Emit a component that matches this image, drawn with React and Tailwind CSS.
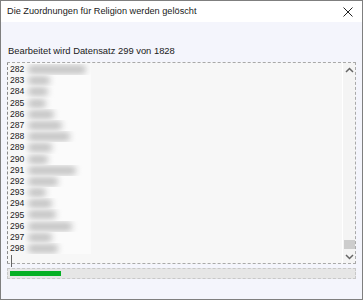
import React from 'react';

const rows = [
  { n: 282, w: 58 }, { n: 283, w: 22 }, { n: 284, w: 20 }, { n: 285, w: 18 },
  { n: 286, w: 26 }, { n: 287, w: 34 }, { n: 288, w: 42 }, { n: 289, w: 24 },
  { n: 290, w: 20 }, { n: 291, w: 48 }, { n: 292, w: 30 }, { n: 293, w: 18 },
  { n: 294, w: 24 }, { n: 295, w: 28 }, { n: 296, w: 44 }, { n: 297, w: 24 },
  { n: 298, w: 30 },
];

const App = () => {
  return (
    <div className="w-[363px] h-[300px] border border-[#7f7f7f] bg-[#f4f5fc] flex flex-col" style={{ fontFamily: '"Liberation Sans", Arial, sans-serif' }}>
      {/* title bar */}
      <div className="h-[21px] bg-white flex items-center justify-between pl-[6px] pr-[9px] shrink-0">
        <span className="text-[9.2px] text-[#1a1a1a]">Die Zuordnungen für Religion werden gelöscht</span>
        <svg width="10" height="10" viewBox="0 0 10 10">
          <path d="M0.5 0.5 L9.5 9.5 M9.5 0.5 L0.5 9.5" stroke="#222" strokeWidth="1" />
        </svg>
      </div>

      <div className="flex flex-col px-[6px] pt-[23px]">
        <div className="text-[9.4px] text-[#1a1a1a] leading-[12px] pl-[1px]">Bearbeitet wird Datensatz 299 von 1828</div>

        {/* list */}
        <div className="mt-[5px] h-[202px] border border-dashed border-[#a9a9a9] border-l-[#8a8a8a] bg-[#f7f7f7] flex">
          <div className="flex-1 pt-[1px] pl-[2px]">
            {rows.map((r) => (
              <div key={r.n} className="h-[11.2px] flex items-center text-[8.6px] leading-[11px] text-[#222]">
                <span className="w-[15px]">{r.n}</span>
                <div className="relative h-[11.2px] w-[66px] bg-[#fbfbfb] overflow-hidden">
                  <div className="absolute left-[3px] top-[1px] h-[9px] bg-[#c2c2c2] blur-[3px] rounded" style={{ width: r.w }} />
                </div>
              </div>
            ))}
            <div className="h-[12px] w-[1px] bg-[#666] ml-[1px] mt-[1px]" />
          </div>
          {/* scrollbar */}
          <div className="w-[13px] bg-[#f4f4f4] border-l border-white flex flex-col items-center justify-between pb-[1px]">
            <svg width="9" height="9" viewBox="0 0 9 9" className="mt-[3px]">
              <path d="M1 6 L4.5 2.5 L8 6" fill="none" stroke="#666" strokeWidth="1.5" />
            </svg>
            <div className="flex flex-col items-center">
              <div className="w-[11px] h-[9px] bg-[#cdcdcd]" />
              <svg width="9" height="9" viewBox="0 0 9 9" className="mt-[3px] mb-[1px]">
                <path d="M1 3 L4.5 6.5 L8 3" fill="none" stroke="#666" strokeWidth="1.5" />
              </svg>
            </div>
          </div>
        </div>

        {/* progress */}
        <div className="mt-[4px] h-[11px] border border-dashed border-[#c8c8c8] bg-[#e6e6e6] p-[2px] flex">
          <div className="w-[51px] h-full bg-[#06b025]" />
        </div>
      </div>
    </div>
  );
};

export default App;
